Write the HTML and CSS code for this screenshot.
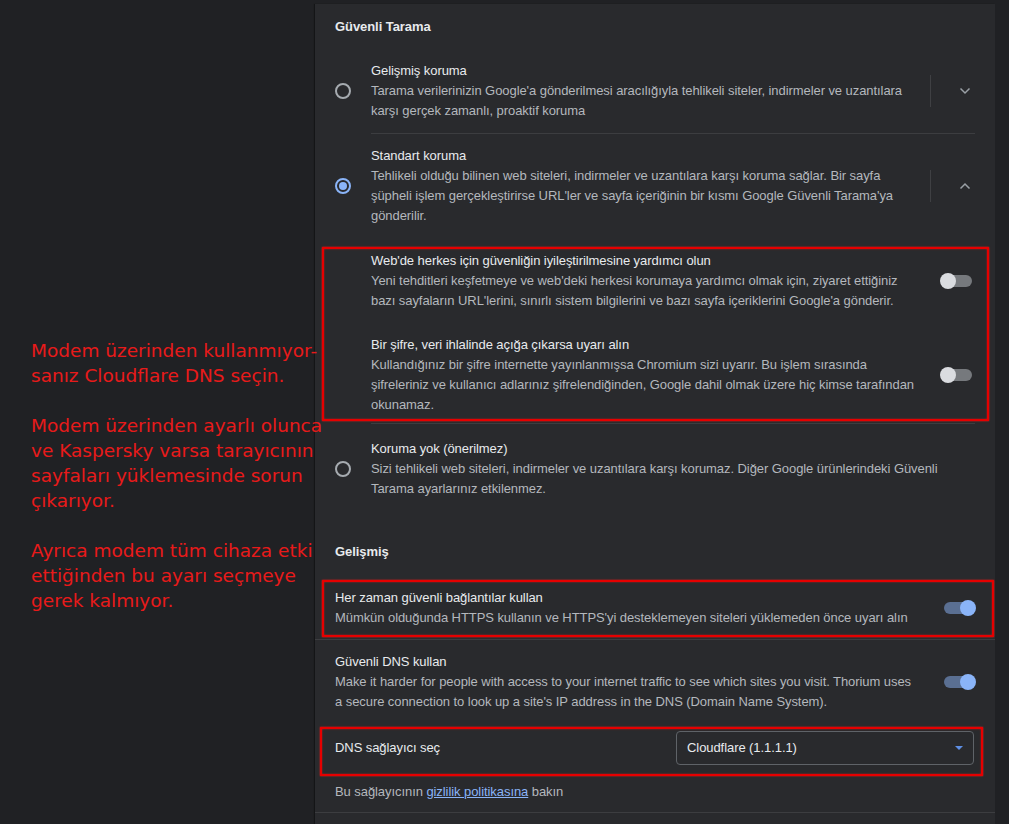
FILE: index.html
```html
<!DOCTYPE html>
<html lang="tr">
<head>
<meta charset="utf-8">
<title>Güvenlik</title>
<link rel="stylesheet" href="styles.css">
</head>
<body>
<div class="page">
  <aside class="notes">
    <p>Modem üzerinden kullanmıyor-<br>sanız Cloudflare DNS seçin.</p>
    <p>Modem üzerinden ayarlı olunca<br>ve Kaspersky varsa tarayıcının<br>sayfaları yüklemesinde sorun<br>çıkarıyor.</p>
    <p>Ayrıca modem tüm cihaza etki<br>ettiğinden bu ayarı seçmeye<br>gerek kalmıyor.</p>
  </aside>

  <main class="card">
    <h2 class="heading">Güvenli Tarama</h2>

    <div class="radio-row">
      <span class="radio-col"><span class="radio"></span></span>
      <div class="text">
        <div class="title">Gelişmiş koruma</div>
        <div class="sub">Tarama verilerinizin Google'a gönderilmesi aracılığıyla tehlikeli siteler, indirmeler ve uzantılara<br>karşı gerçek zamanlı, proaktif koruma</div>
      </div>
      <span class="vsep"></span>
      <span class="chev">
        <svg width="12" height="8" viewBox="0 0 12 8"><polyline points="1.5,1.5 6,6 10.5,1.5" fill="none" stroke="#9aa0a6" stroke-width="1.5"/></svg>
      </span>
    </div>

    <div class="sep inset"></div>

    <div class="radio-row">
      <span class="radio-col"><span class="radio checked"></span></span>
      <div class="text">
        <div class="title">Standart koruma</div>
        <div class="sub">Tehlikeli olduğu bilinen web siteleri, indirmeler ve uzantılara karşı koruma sağlar. Bir sayfa<br>şüpheli işlem gerçekleştirirse URL'ler ve sayfa içeriğinin bir kısmı Google Güvenli Tarama'ya<br>gönderilir.</div>
      </div>
      <span class="vsep"></span>
      <span class="chev">
        <svg width="12" height="8" viewBox="0 0 12 8"><polyline points="1.5,6.5 6,2 10.5,6.5" fill="none" stroke="#9aa0a6" stroke-width="1.5"/></svg>
      </span>
    </div>

    <div class="mark mark-sub">
      <div class="sub-row">
        <div class="text">
          <div class="title">Web'de herkes için güvenliğin iyileştirilmesine yardımcı olun</div>
          <div class="sub">Yeni tehditleri keşfetmeye ve web'deki herkesi korumaya yardımcı olmak için, ziyaret ettiğiniz<br>bazı sayfaların URL'lerini, sınırlı sistem bilgilerini ve bazı sayfa içeriklerini Google'a gönderir.</div>
        </div>
        <span class="toggle"></span>
      </div>
      <div class="sub-row second">
        <div class="text">
          <div class="title">Bir şifre, veri ihlalinde açığa çıkarsa uyarı alın</div>
          <div class="sub">Kullandığınız bir şifre internette yayınlanmışsa Chromium sizi uyarır. Bu işlem sırasında<br>şifreleriniz ve kullanıcı adlarınız şifrelendiğinden, Google dahil olmak üzere hiç kimse tarafından<br>okunamaz.</div>
        </div>
        <span class="toggle"></span>
      </div>
    </div>

    <div class="sep inset after-mark"></div>

    <div class="radio-row last">
      <span class="radio-col"><span class="radio"></span></span>
      <div class="text">
        <div class="title">Koruma yok (önerilmez)</div>
        <div class="sub">Sizi tehlikeli web siteleri, indirmeler ve uzantılara karşı korumaz. Diğer Google ürünlerindeki Güvenli<br>Tarama ayarlarınız etkilenmez.</div>
      </div>
    </div>

    <h2 class="heading second">Gelişmiş</h2>

    <div class="mark mark-https">
      <div class="text">
        <div class="title">Her zaman güvenli bağlantılar kullan</div>
        <div class="sub">Mümkün olduğunda HTTPS kullanın ve HTTPS'yi desteklemeyen siteleri yüklemeden önce uyarı alın</div>
      </div>
      <span class="toggle on"></span>
    </div>

    <div class="sep full after-https"></div>

    <div class="dns-row">
      <div class="text">
        <div class="title">Güvenli DNS kullan</div>
        <div class="sub">Make it harder for people with access to your internet traffic to see which sites you visit. Thorium uses<br>a secure connection to look up a site's IP address in the DNS (Domain Name System).</div>
      </div>
      <span class="toggle on shift"></span>
    </div>

    <div class="mark mark-dns">
      <span class="title">DNS sağlayıcı seç</span>
      <div class="select">
        <span>Cloudflare (1.1.1.1)</span>
        <svg width="8" height="4" viewBox="0 0 8 4"><polygon points="0,0 8,0 4,4" fill="#5e8fe6"/></svg>
      </div>
    </div>

    <div class="note">Bu sağlayıcının <a href="#" class="link">gizlilik politikasına</a> bakın</div>

    <div class="sep full"></div>
  </main>
</div>
</body>
</html>
```

FILE: styles.css
```css
* { box-sizing: border-box; }

html, body {
  margin: 0;
  padding: 0;
  background: #202124;
  height: 824px;
  overflow: hidden;
}

body {
  font-family: "Liberation Sans", Arial, sans-serif;
  font-size: 13px;
  line-height: 20px;
  color: #e8eaed;
  letter-spacing: -0.07px;
}

.page {
  display: flex;
  height: 824px;
}

.notes {
  position: relative;
  z-index: 1;
  width: 315px;
  flex: none;
  padding: 338px 0 0 31px;
  font-family: "DejaVu Sans", Verdana, sans-serif;
  font-size: 18.5px;
  line-height: 25px;
  letter-spacing: 0;
  white-space: nowrap;
  color: #e81a1a;
}

.notes p {
  margin: 0 0 25px;
}

.card {
  width: 680px;
  flex: none;
  margin-top: 4px;
  padding: 13px 20px 0;
  background: #292a2d;
  box-shadow: -1px 0 1px rgba(0, 0, 0, 0.35);
}

.heading {
  margin: 0 0 12px;
  font-size: 13px;
  line-height: 20px;
  font-weight: bold;
  color: #e8eaed;
}

.heading.second {
  margin: 31px 0 18px;
}

.title {
  color: #e8eaed;
}

.sub {
  color: #b4b8bd;
}

.radio-row {
  display: flex;
  align-items: center;
  padding: 12px 0;
}

.radio-row.last {
  padding-top: 15px;
}

.radio-col {
  width: 36px;
  flex: none;
  display: flex;
  align-items: center;
}

.radio {
  width: 16px;
  height: 16px;
  border: 2px solid #a6abb0;
  border-radius: 50%;
  position: relative;
}

.radio.checked {
  border-color: #8ab4f8;
}

.radio.checked::after {
  content: "";
  position: absolute;
  left: 2px;
  top: 2px;
  width: 8px;
  height: 8px;
  border-radius: 50%;
  background: #8ab4f8;
}

.text {
  flex: 1;
  min-width: 0;
  white-space: nowrap;
}

.vsep {
  width: 1px;
  height: 32px;
  background: #3f4043;
  flex: none;
}

.chev {
  width: 20px;
  margin-left: 24px;
  flex: none;
  display: flex;
  justify-content: center;
  align-items: center;
}

.sep {
  height: 1px;
  background: #3c3d40;
}

.sep.inset {
  margin-left: 36px;
}

.sep.after-mark {
  margin-top: 2px;
}

.sep.full {
  margin-left: -20px;
  margin-right: -20px;
}

.sep.after-https {
  margin-top: 2px;
}

.mark {
  border: 2px solid #e60000;
  box-shadow: 0 0 1.5px #ff1a1a, inset 0 0 1.5px #ff1a1a;
}

.mark-sub {
  margin: 9px -14px 0 -13px;
  padding: 2px 11px 4px 47px;
}

.sub-row {
  display: flex;
  align-items: center;
}

.sub-row.second {
  margin-top: 24px;
}

.toggle {
  position: relative;
  width: 36px;
  height: 16px;
  flex: none;
}

.toggle::before {
  content: "";
  position: absolute;
  left: 4px;
  top: 2px;
  width: 28px;
  height: 12px;
  border-radius: 6px;
  background: #76797d;
}

.toggle::after {
  content: "";
  position: absolute;
  left: 0;
  top: 0;
  width: 16px;
  height: 16px;
  border-radius: 50%;
  background: #dadce0;
}

.toggle.on::before {
  background: #5a6f92;
}

.toggle.on::after {
  left: 20px;
  background: #8ab4f8;
}

.mark-https {
  display: flex;
  align-items: center;
  margin: 0 -19px 0 -13px;
  padding: 6px 16px 7px 11px;
}

.dns-row {
  display: flex;
  align-items: center;
  padding: 12px 0 15px;
}

.toggle.shift {
  margin-right: -1px;
}

.mark-dns {
  display: flex;
  align-items: center;
  justify-content: space-between;
  margin: 0 -8px 0 -15px;
  padding: 2px 7px 9px 13px;
}

.select {
  width: 298px;
  height: 34px;
  border: 1px solid #5f6368;
  border-radius: 4px;
  display: flex;
  align-items: center;
  justify-content: space-between;
  padding: 0 10px 0 10px;
  color: #e8eaed;
}

.note {
  margin: 6px 0 10px;
  color: #b4b8bd;
}

.link {
  color: #8ab4f8;
  text-decoration: underline;
}
```
